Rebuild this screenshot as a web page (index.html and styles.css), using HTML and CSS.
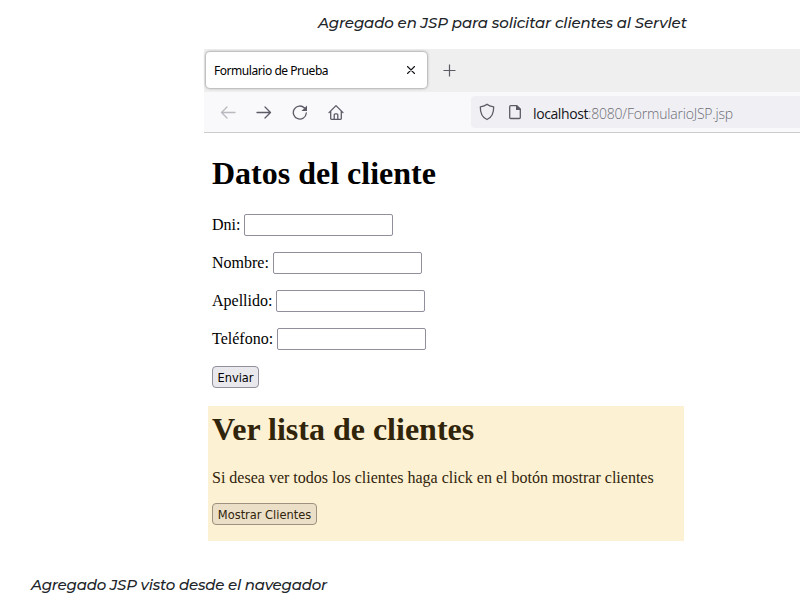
FILE: index.html
```html
<!DOCTYPE html>
<html lang="es">
<head>
<meta charset="utf-8">
<title>Formulario de Prueba</title>
<link rel="stylesheet" href="styles.css">
</head>
<body>
<p class="caption caption-top"><span>Agregado en JSP para solicitar clientes al Servlet</span></p>
<figure class="browser">
  <div class="tabs">
    <div class="tab"><span class="tab-title">Formulario de Prueba</span>
      <svg class="close" width="10" height="10" viewBox="0 0 10 10"><path d="M1.500 1.500l7 7M8.500 1.500l-7 7"/></svg>
    </div>
    <svg class="plus" width="13" height="13" viewBox="0 0 13 13"><path d="M6.5 .5v12M.5 6.5h12"/></svg>
  </div>
  <div class="toolbar">
    <svg class="icon back" width="16" height="16" viewBox="0 0 16 16"><path d="M15 8.500H1.5M7 3L1.5 8.500 7 14"/></svg>
    <svg class="icon" width="16" height="16" viewBox="0 0 16 16"><path d="M1 8.500h13.500M9 3L14.500 8.500 9 14"/></svg>
    <svg class="icon" width="16" height="16" viewBox="0 0 16 16"><path d="M14.300 9A6.500 6.500 0 1 1 12.500 4"/><path class="solid" d="M15 1.500v5.500H9.500z"/></svg>
    <svg class="icon" width="16" height="16" viewBox="0 0 16 16"><path d="M1 8.600L8 1.600l7 7M2.700 7.300v7.200q0 .8.800.8h9q.8 0 .8-.8V7.300M6.200 15.300v-4.500q0-1 1-1h1.600q1 0 1 1v4.500"/></svg>
    <div class="address">
      <svg class="icon" width="16" height="18" viewBox="0 0 16 18"><path d="M8 1.300C6.300 2.800 3.800 3.500 1.300 3.800 1.200 9.500 2.500 14.300 8 16.500c5.500-2.200 6.800-7 6.700-12.700C12.200 3.500 9.700 2.800 8 1.300z"/></svg>
      <svg class="icon page" width="14" height="16" viewBox="0 0 14 16"><path d="M2.700 1.700h6L12.300 5.300v8.200q0 1-1 1H2.700q-1 0-1-1V2.700q0-1 1-1z"/><path class="solid" d="M8 1.200h1L12.900 5v1H8z"/></svg>
      <span class="url"><b>localhost</b>:8080/FormularioJSP.jsp</span>
    </div>
  </div>
  <div class="content">
    <h1>Datos del cliente</h1>
    <form>
      <label>Dni: <input type="text"></label>
      <label>Nombre: <input type="text"></label>
      <label>Apellido: <input type="text"></label>
      <label>Teléfono: <input type="text"></label>
      <button type="button">Enviar</button>
    </form>
    <section class="highlight">
      <h1>Ver lista de clientes</h1>
      <p>Si desea ver todos los clientes haga click en el botón mostrar clientes</p>
      <button type="button" class="show">Mostrar Clientes</button>
    </section>
  </div>
</figure>
<p class="caption caption-bottom"><span>Agregado JSP visto desde el navegador</span></p>
</body>
</html>
```
FILE: styles.css
```css
* { box-sizing: border-box; }
body { margin: 0; background: #fff; overflow: hidden; }
p, h1, figure { margin: 0; }
svg { display: block; flex: none; fill: none; stroke: #5b5b66; stroke-width: 1.3; stroke-linecap: round; stroke-linejoin: round; }
.caption { font: italic 500 15px/20px Montserrat, Inter, sans-serif; color: #212529; white-space: nowrap; }
.caption-top { padding: 13px 0 0 318px; height: 49px; letter-spacing: -.13px; }
.caption-bottom { padding: 34px 0 0 31px; letter-spacing: -.22px; }
.browser { margin-left: 204px; width: 596px; height: 492px; }
.tabs { height: 43px; background: #efefef; display: flex; align-items: flex-start; padding: 3px 0 0 2px; }
.tab { width: 221px; height: 36px; background: #fff; border-radius: 4px; box-shadow: 0 0 3px rgba(0,0,0,.55); display: flex; align-items: center; justify-content: space-between; padding: 2px 12px 0 8px; }
.tab-title { font: 12px/16px "Noto Sans", sans-serif; color: #000; letter-spacing: -.45px; white-space: nowrap; }
.close { stroke: #15141a; stroke-width: 1.1; margin: -2px -1px 0 0; }
.plus { margin: 12px 0 0 16px; stroke-linecap: butt; stroke-width: 1.2; }
.toolbar { height: 41px; background: #f9f9fb; border-bottom: 1px solid #ccc; display: flex; align-items: center; padding-left: 16px; gap: 20px; }
.back { opacity: .4; }
.solid { fill: #5b5b66; stroke: none; }
.address { margin-left: auto; width: 329px; height: 32px; background: #f0f0f4; border-radius: 4px 0 0 4px; display: flex; align-items: center; padding-left: 8px; }
.page { margin-left: 13px; }
.url { margin: 3px 0 0 11px; font: 14px/20px "Open Sans", sans-serif; font-weight: 300; color: #6c6c74; letter-spacing: -.2px; white-space: nowrap; }
.url b { font-weight: 400; color: #15141a; letter-spacing: -.4px; }
.content { padding: 22px 0 0 8px; font: 16px/18px "Liberation Serif", serif; color: #000; }
h1 { font: bold 32px/37px "Liberation Serif", serif; }
form { display: flex; flex-direction: column; align-items: flex-start; gap: 16px; margin-top: 22px; }
label { display: flex; align-items: center; gap: 4px; height: 22px; white-space: nowrap; }
input { width: 149px; height: 22px; border: 1px solid #8f8f9d; border-radius: 2px; background: #fff; padding: 0; margin: 0; }
button { display: block; width: 47px; height: 22px; padding: 1px 0 0; border: 1px solid #8f8f9d; border-radius: 4px; background: #e9e9ed; color: #000; font: 12.7px/18px "DejaVu Sans Condensed", "DejaVu Sans", sans-serif; font-stretch: condensed; white-space: nowrap; }
.highlight { width: 476px; height: 135px; margin: 18px 0 0 -4px; padding: 5px 4px; background: #fdf1d3; color: #30240b; }
.highlight p { margin: 21px 0 16px; white-space: nowrap; }
.highlight .show { width: 105px; background: #ebdfc7; border-color: #a09080; color: #30240b; }
```
